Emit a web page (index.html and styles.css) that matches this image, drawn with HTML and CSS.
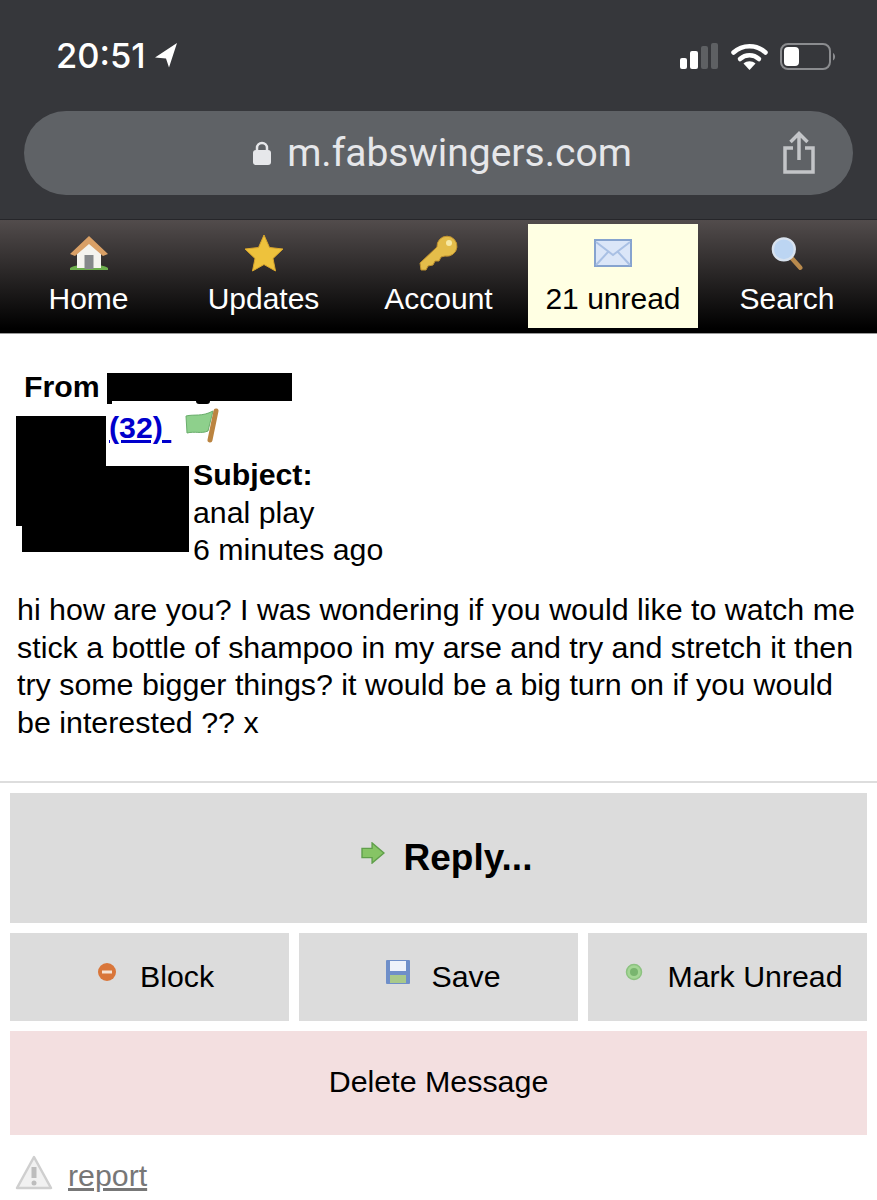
FILE: index.html
```html
<!DOCTYPE html>
<html lang="en">
<head>
  <meta charset="UTF-8">
  <meta name="viewport" content="width=device-width, initial-scale=1.0">
  <title>m.fabswingers.com</title>
  <link rel="stylesheet" href="styles.css">
</head>
<body>
  <!-- phone chrome -->
  <div class="chrome">
    <div class="status">
      <div class="time">
        <span>20:51</span>
        <svg width="24" height="26" viewBox="0 0 24 26"><path d="M23 1 1 15.500l11 1 3 9z" fill="#fff"/></svg>
      </div>
      <div class="status-icons">
        <svg width="40" height="27" viewBox="0 0 40 27">
          <rect x="1" y="15" width="7" height="11" rx="2" fill="#fff"/>
          <rect x="11" y="8" width="8" height="18" rx="2" fill="#fff"/>
          <rect x="22" y="3" width="7" height="23" rx="2" fill="#5e6063"/>
          <rect x="32" y="0" width="7" height="26" rx="2" fill="#5e6063"/>
        </svg>
        <svg width="37" height="27" viewBox="0 0 37 27">
          <path d="M2.500 9.500C11.500 1 25.500 1 34.500 9.500" fill="none" stroke="#fff" stroke-width="4.500" stroke-linecap="round"/>
          <path d="M9 16C14.500 11 22.500 11 28 16" fill="none" stroke="#fff" stroke-width="4.500" stroke-linecap="round"/>
          <path d="M18.500 27 12.500 20.500C16 17.500 21 17.500 24.500 20.500z" fill="#fff"/>
        </svg>
        <svg width="56" height="27" viewBox="0 0 56 27">
          <rect x="1" y="1" width="49" height="25" rx="7" fill="none" stroke="#8b8c8f" stroke-width="2"/>
          <rect x="4" y="4" width="15" height="19" rx="4" fill="#fff"/>
          <path d="M53 10c2.500 1 3 6 0 7.500z" fill="#8b8c8f"/>
        </svg>
      </div>
    </div>
    <div class="url-bar">
      <div class="url">
        <svg width="20" height="26" viewBox="0 0 20 26">
          <path d="M5 12V8a5 5 0 0 1 10 0v4" fill="none" stroke="#e6e7ea" stroke-width="2.500"/>
          <rect x="1" y="10" width="18" height="15" rx="3" fill="#e6e7ea"/>
        </svg>
        <span>m.fabswingers.com</span>
      </div>
      <svg class="share" width="34" height="44" viewBox="0 0 34 44">
        <path d="M11 17H3v24h28V17h-8" fill="none" stroke="#c3c5c8" stroke-width="3.500"/>
        <path d="M17 29V3M8.500 11 17 2.500 25.500 11" fill="none" stroke="#c3c5c8" stroke-width="3.500"/>
      </svg>
    </div>
  </div>

  <nav class="nav">
    <a class="nav-item">
      <svg width="40" height="36" viewBox="0 0 40 36">
        <path d="M1 33c8-5 30-5 38 0v2H1z" fill="#6cae4c"/>
        <path d="M8 17 20 8l12 9v16H8z" fill="#f4f4ee"/>
        <rect x="15.500" y="20" width="9" height="14" fill="#85898a"/>
        <path d="M1 19 20 1l19 18-5 2L20 9 6 21z" fill="#d9a066"/>
      </svg>
      <span>Home</span>
    </a>
    <a class="nav-item">
      <svg width="40" height="38" viewBox="0 0 40 38">
        <path d="m20 1 5.500 12.500L39 15l-10 9.500L31.500 37 20 30.500 8.500 37 11 24.500 1 15l13.500-1.500z" fill="#eec23c" stroke="#d8a52c"/>
      </svg>
      <span>Updates</span>
    </a>
    <a class="nav-item">
      <svg width="40" height="38" viewBox="0 0 40 38">
        <path d="M1 29 18 13a10 10 0 1 1 8 9l-4 1-2 4-4 0-2 4-5 1-2 4H2z" fill="#e4bd4a" stroke="#c0922f"/>
        <circle cx="30" cy="9" r="3" fill="#f7e9a4"/>
      </svg>
      <span>Account</span>
    </a>
    <a class="nav-item active">
      <svg width="38" height="28" viewBox="0 0 38 28">
        <rect x="1" y="1" width="36" height="26" fill="#dbe6f8" stroke="#86a3cf" stroke-width="2"/>
        <path d="m2 3 17 13L36 3M2 26l12-13M36 26 24 13" fill="none" stroke="#a9c0e4" stroke-width="2"/>
      </svg>
      <span>21 unread</span>
    </a>
    <a class="nav-item">
      <svg width="33" height="36" viewBox="0 0 36 36">
        <path d="m22 23 10 11" stroke="#b98a4d" stroke-width="5" stroke-linecap="round"/>
        <circle cx="14" cy="14" r="12" fill="#bcd5f2" stroke="#d8e2ee" stroke-width="2.500"/>
      </svg>
      <span>Search</span>
    </a>
  </nav>

  <main class="message">
    <div class="head">
      <div class="from"><b>From</b></div>
      <div class="sender">
        <a class="age" href="#">(32)&nbsp;</a>
        <svg width="36" height="36" viewBox="0 0 36 36">
          <path d="M1 8c8-2 16 1 27-5l-5 20c-7 3-13 0-21 2z" fill="#8ed08c" stroke="#6aad6c"/>
          <path d="M31 3 25 32" stroke="#bb8440" stroke-width="5" stroke-linecap="round"/>
        </svg>
      </div>
      <div class="subject">
        <b>Subject:</b><br>
        anal play<br>
        6 minutes ago
      </div>
      <!-- blacked out name and photo -->
      <div class="redact name"></div>
      <div class="redact name-j"></div>
      <div class="redact name-g"></div>
      <div class="redact photo-a"></div>
      <div class="redact photo-b"></div>
      <div class="redact photo-c"></div>
    </div>
    <p class="body">hi how are you? I was wondering if you would like to watch me stick a bottle of shampoo in my arse and try and stretch it then try some bigger things? it would be a big turn on if you would be interested ?? x</p>
  </main>

  <div class="actions">
    <a class="btn reply">
      <svg width="24" height="22" viewBox="0 0 26 24"><path d="M1 7h11V1l13 11-13 11v-6H1z" fill="#86c465" stroke="#5f9f4a" stroke-width="1.500"/></svg>
      <span>Reply...</span>
    </a>
    <div class="btn-row">
      <a class="btn small">
        <svg width="28" height="20" viewBox="-4 0 28 20"><circle cx="10" cy="10" r="9" fill="#d9763a"/><rect x="5" y="8.500" width="10" height="3" fill="#f6e3d4"/></svg>
        <span>Block</span>
      </a>
      <a class="btn small">
        <svg width="28" height="26" viewBox="-1 0 28 26">
          <rect x="1" y="1" width="24" height="24" rx="1" fill="#6f8fc9"/>
          <rect x="5" y="2" width="16" height="10" fill="#eef2fa"/>
          <rect x="5" y="16" width="16" height="8" fill="#a9c98a"/>
        </svg>
        <span>Save</span>
      </a>
      <a class="btn small">
        <svg width="28" height="18" viewBox="-5 0 28 18"><circle cx="9" cy="9" r="7.500" fill="#a4d695" stroke="#8cc280" stroke-width="1.500"/><circle cx="9" cy="9" r="4" fill="#79b56f"/></svg>
        <span>Mark Unread</span>
      </a>
    </div>
    <a class="btn delete"><span>Delete Message</span></a>
  </div>

  <div class="report">
    <svg width="38" height="36" viewBox="0 0 38 36">
      <path d="M19 2 36 33H2z" fill="#f1f1f1" stroke="#cfcfcf" stroke-width="2.500" stroke-linejoin="round"/>
      <path d="M19 12v11" stroke="#bdbdbd" stroke-width="5"/>
      <circle cx="19" cy="28" r="2.500" fill="#bdbdbd"/>
    </svg>
    <a href="#">report</a>
  </div>
</body>
</html>
```

FILE: styles.css
```css
* {
  margin: 0;
  padding: 0;
  box-sizing: border-box;
}

body {
  font-family: "Liberation Sans", Arial, sans-serif;
  font-size: 30.300px;
  color: #000;
  background: #fff;
  height: 1200px;
  overflow: hidden;
}

.chrome {
  height: 219px;
  padding: 34px 24px 0;
  background: #36373b;
}

.status {
  display: flex;
  justify-content: space-between;
  align-items: center;
  height: 42px;
  padding: 0 17px 0 32px;
}

.time {
  display: flex;
  align-items: center;
  gap: 8px;
  font-family: Inter, sans-serif;
  font-size: 34.500px;
  font-weight: 500;
  color: #fff;
}

.status-icons {
  display: flex;
  align-items: center;
  gap: 12px;
  margin-top: 2px;
}

.url-bar {
  position: relative;
  display: flex;
  justify-content: center;
  align-items: center;
  height: 84px;
  margin-top: 35px;
  padding-left: 7px;
  background: #5f6266;
  border-radius: 42px;
}

.url {
  display: flex;
  align-items: center;
  gap: 15px;
  font-family: Roboto, sans-serif;
  font-size: 39px;
  color: #e6e7ea;
}

.share {
  position: absolute;
  right: 37px;
  top: 20px;
}

.nav {
  display: grid;
  grid-template-columns: repeat(5, 1fr);
  height: 115px;
  padding: 4px 1px 5px;
  background: linear-gradient(#524c4c, #000 96%);
  border-top: 1px solid #26262a;
  border-bottom: 1px solid #999;
  font-size: 30px;
}

.nav-item {
  display: flex;
  flex-direction: column;
  align-items: center;
  padding-top: 10px;
  color: #fff;
}

.nav-item svg {
  height: 38px;
  margin-bottom: 10px;
}

.nav-item:last-child {
  padding-right: 3px;
}

.nav-item.active {
  background: #ffffe3;
  color: #000;
  margin: 0 3px 0 2px;
}

.message {
  height: 449px;
  border-bottom: 2px solid #ddd;
  padding: 34px 17px 0;
}

.head {
  position: relative;
  height: 186px;
}

.from {
  padding-left: 7px;
  line-height: 38px;
}

.sender {
  display: flex;
  align-items: flex-start;
  height: 50px;
  padding: 0 0 0 92px;
  gap: 14px;
}

.sender svg {
  margin-top: 2px;
}

.age {
  color: #0000cc;
  font-weight: bold;
  line-height: 44px;
}

.subject {
  padding-left: 176px;
  line-height: 37.500px;
}

.redact {
  position: absolute;
  background: #000;
}

.name {
  left: 90px;
  top: 5px;
  width: 185px;
  height: 28px;
}

.name-j {
  left: 90px;
  top: 33px;
  width: 5px;
  height: 3px;
}

.name-g {
  left: 179px;
  top: 33px;
  width: 14px;
  height: 3px;
  border-radius: 0 0 7px 7px;
}

.photo-a {
  left: -1px;
  top: 48px;
  width: 90px;
  height: 110px;
}

.photo-b {
  left: 89px;
  top: 98px;
  width: 83px;
  height: 86px;
}

.photo-c {
  left: 5px;
  top: 158px;
  width: 84px;
  height: 26px;
}

.body {
  margin-top: 37px;
  line-height: 37.500px;
  font-size: 30.400px;
}

.actions {
  display: flex;
  flex-direction: column;
  gap: 10px;
  padding: 10px 10px 0;
}

.btn {
  display: flex;
  justify-content: center;
  align-items: center;
  background: #dcdcdc;
  color: #000;
}

.reply {
  height: 130px;
  gap: 19px;
  padding-left: 16px;
  font-size: 37px;
  font-weight: bold;
}

.reply svg {
  margin-bottom: 10px;
}

.btn-row {
  display: grid;
  grid-template-columns: repeat(3, 1fr);
  gap: 10px;
  height: 88px;
}

.small {
  gap: 19px;
  padding: 0 0 1px 8px;
}

.small svg {
  margin-bottom: 9px;
}

.delete {
  height: 104px;
  padding-bottom: 3px;
  background: #f3dfe0;
  font-size: 30.400px;
}

.report {
  display: flex;
  align-items: center;
  gap: 15px;
  padding: 20px 15px 0;
}

.report svg {
  margin-bottom: 5px;
}

.report a {
  color: #777;
}
```
